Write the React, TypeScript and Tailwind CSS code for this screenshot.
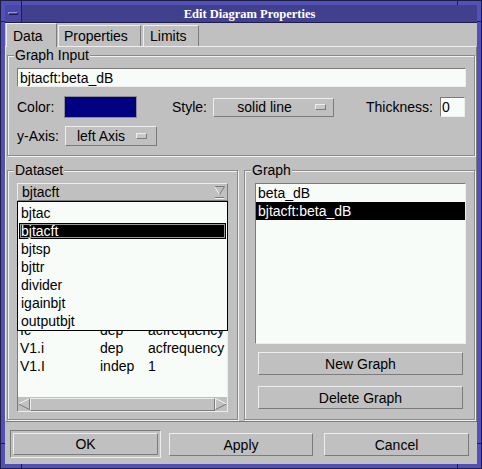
import React from 'react';

const raised = 'border border-t-[#ededed] border-l-[#ededed] border-r-[#7b7b7b] border-b-[#7b7b7b]';
const sunken = 'border border-t-[#7b7b7b] border-l-[#7b7b7b] border-r-[#ededed] border-b-[#ededed]';
const groupBox =
  'min-w-0 border border-[#8a8a8a] shadow-[inset_1px_1px_0_#f2f2f2,1px_1px_0_#f2f2f2]';
const legendCls = 'ml-[6px] px-[1px] bg-[#c0c0c0] leading-[16px]';

const datasets = ['bjtac', 'bjtacft', 'bjtsp', 'bjttr', 'divider', 'igainbjt', 'outputbjt'];
const variables = [
  ['Ic', 'dep', 'acfrequency'],
  ['V1.i', 'dep', 'acfrequency'],
  ['V1.I', 'indep', '1'],
];
const graphs = ['beta_dB', 'bjtacft:beta_dB'];

const Indicator: React.FC = () => (
  <span className={`block w-[11px] h-[6px] bg-[#c8c8c8] ${raised}`} />
);

const DownArrow: React.FC = () => (
  <svg width="11" height="13" viewBox="0 0 11 13">
    <polyline points="0.5,0.5 10.5,0.5" stroke="#7b7b7b" fill="none" />
    <polyline points="0.5,0.5 5.5,8.5" stroke="#f0f0f0" fill="none" />
    <polyline points="10.5,0.5 5.5,8.5" stroke="#7b7b7b" fill="none" />
    <line x1="1" y1="11.5" x2="10" y2="11.5" stroke="#7b7b7b" />
    <line x1="1" y1="12.5" x2="10" y2="12.5" stroke="#f0f0f0" />
  </svg>
);

const ScrollArrow: React.FC<{ dir: 'left' | 'right' }> = ({ dir }) => (
  <svg width="12" height="12" viewBox="0 0 12 12">
    {dir === 'left' ? (
      <>
        <polyline points="11.5,0.5 0.5,6" stroke="#f0f0f0" fill="none" />
        <polyline points="0.5,6 11.5,11.5 11.5,0.5" stroke="#7b7b7b" fill="none" />
      </>
    ) : (
      <>
        <polyline points="0.5,11.5 0.5,0.5 11.5,6" stroke="#f0f0f0" fill="none" />
        <polyline points="11.5,6 0.5,11.5" stroke="#7b7b7b" fill="none" />
      </>
    )}
  </svg>
);

const App: React.FC = () => {
  return (
    <div className="relative w-[482px] h-[469px] bg-[#5151b6] border border-[#1d1d48] p-[4px] flex flex-col font-['Liberation_Sans',Arial,sans-serif] text-[14px] leading-[16px] text-black">
      {/* frame resize notches */}
      <span className="absolute left-[20px] top-0 w-px h-[4px] bg-[#1d1d48]" />
      <span className="absolute left-[456px] top-0 w-px h-[4px] bg-[#1d1d48]" />
      <span className="absolute left-[20px] bottom-0 w-px h-[4px] bg-[#1d1d48]" />
      <span className="absolute left-[456px] bottom-0 w-px h-[4px] bg-[#1d1d48]" />
      <span className="absolute left-0 top-[20px] w-[4px] h-px bg-[#1d1d48]" />
      <span className="absolute left-0 top-[442px] w-[4px] h-px bg-[#1d1d48]" />
      <span className="absolute right-0 top-[20px] w-[4px] h-px bg-[#1d1d48]" />
      <span className="absolute right-0 top-[442px] w-[4px] h-px bg-[#1d1d48]" />

      {/* title bar */}
      <div className="flex h-[18px] border-b border-[#1d1d48]">
        <div className="w-[17px] border-r border-[#1d1d48] bg-[#4848a8] flex items-center justify-center">
          <span className="block w-[10px] h-[3px] border border-t-[#9090e0] border-l-[#9090e0] border-b-[#1d1d48] border-r-[#1d1d48]" />
        </div>
        <div className="flex-1 bg-[#40408e] flex items-center justify-center font-['Liberation_Serif',serif] font-bold text-[12.5px] text-white">
          Edit Diagram Properties
        </div>
      </div>

      <div className="flex-1 bg-[#c0c0c0] flex flex-col">
        {/* tabs */}
        <div className="h-[23px] flex items-end pl-[1px]">
          <div className="relative z-10 -mb-px h-[24px] w-[51px] bg-[#c0c0c0] border-l border-t border-r border-l-[#ededed] border-t-[#ededed] border-r-[#7b7b7b] pl-[6px] flex items-center">
            Data
          </div>
          <div className="ml-[1px] h-[21px] w-[83px] border-l border-t border-r border-l-[#ededed] border-t-[#ededed] border-r-[#7b7b7b] pl-[5px] flex items-center">
            Properties
          </div>
          <div className="ml-[2px] h-[21px] w-[56px] border-l border-t border-r border-l-[#ededed] border-t-[#ededed] border-r-[#7b7b7b] pl-[6px] flex items-center">
            Limits
          </div>
        </div>

        {/* tab pane */}
        <div className={`h-[376px] flex flex-col px-[1px] ${raised}`}>
          <fieldset className={groupBox}>
            <legend className={legendCls}>Graph Input</legend>
            <div className="pl-[9px] pr-[8px] pt-[5px] pb-[9px]">
              <div className={`h-[19px] bg-[#f8fcf8] pl-[2px] flex items-center ${sunken}`}>
                bjtacft:beta_dB
              </div>
              <div className="mt-[9px] h-[22px] flex items-center">
                <span className="w-[47px]">Color:</span>
                <span className="w-[73px] h-[22px] bg-[#000080] border border-[#8c8c8c]" />
                <span className="ml-[35px] w-[41px]">Style:</span>
                <div className={`w-[121px] h-[19px] flex items-center ${raised}`}>
                  <span className="flex-1 text-center">solid line</span>
                  <span className="mr-[7px]">
                    <Indicator />
                  </span>
                </div>
                <span className="ml-[32px] w-[74px]">Thickness:</span>
                <div className={`w-[25px] h-[20px] bg-[#f8fcf8] pl-px flex items-center ${sunken}`}>
                  0
                </div>
              </div>
              <div className="mt-[8px] h-[20px] flex items-center">
                <span className="w-[48px]">y-Axis:</span>
                <div className={`w-[92px] h-[20px] flex items-center ${raised}`}>
                  <span className="flex-1 text-center">left Axis</span>
                  <span className="mr-[9px]">
                    <Indicator />
                  </span>
                </div>
              </div>
            </div>
          </fieldset>

          <div className="mt-[6px] flex-1 flex gap-[6px] pb-[1px]">
            {/* Dataset */}
            <fieldset className={`w-[231px] flex flex-col ${groupBox}`}>
              <legend className={legendCls}>Dataset</legend>
              <div className="flex-1 flex flex-col pl-[9px] pr-[9px] pt-[5px] pb-[7px]">
                <div className="relative flex-1 flex flex-col">
                  <div className={`h-[18px] flex items-center pl-[4px] pr-[2px] ${raised}`}>
                    <span className="flex-1">bjtacft</span>
                    <DownArrow />
                  </div>
                  <div className={`flex-1 flex flex-col ${sunken}`}>
                    <div className="flex-1 bg-[#f8fcf8] overflow-hidden pt-[119px] pl-[2px]">
                      {variables.map(([name, kind, dep]) => (
                        <div key={name} className="h-[18px] flex items-center">
                          <span className="w-[80px]">{name}</span>
                          <span className="w-[48px]">{kind}</span>
                          <span>{dep}</span>
                        </div>
                      ))}
                    </div>
                    <div className="h-[14px] flex items-center bg-[#c0c0c0]">
                      <ScrollArrow dir="left" />
                      <div className={`flex-1 h-[13px] ${raised}`} />
                      <ScrollArrow dir="right" />
                    </div>
                  </div>

                  {/* open dropdown */}
                  <div className="absolute left-0 right-0 top-[18px] z-10 bg-[#f8fcf8] border border-black pt-[2px]">
                    {datasets.map((d) => (
                      <div key={d} className="h-[18px] flex">
                        <div
                          className={
                            d === 'bjtacft'
                              ? 'flex-1 m-px bg-black text-white pl-[2px] flex items-center outline outline-1 outline-[#9a9a9a] -outline-offset-2'
                              : 'flex-1 pl-[3px] flex items-center'
                          }
                        >
                          {d}
                        </div>
                      </div>
                    ))}
                  </div>
                </div>
              </div>
            </fieldset>

            {/* Graph */}
            <fieldset className={`flex-1 flex flex-col ${groupBox}`}>
              <legend className={legendCls}>Graph</legend>
              <div className="flex-1 flex flex-col pl-[10px] pr-[8px] pt-[5px]">
                <div className={`h-[161px] bg-[#f8fcf8] ${sunken}`}>
                  {graphs.map((g) => (
                    <div
                      key={g}
                      className={`h-[18px] pl-[2px] flex items-center ${
                        g === 'bjtacft:beta_dB' ? 'bg-black text-white' : ''
                      }`}
                    >
                      {g}
                    </div>
                  ))}
                </div>
                <button className={`mt-[8px] mx-[3px] h-[23px] bg-[#c0c0c0] ${raised}`}>
                  New Graph
                </button>
                <button className={`mt-[11px] mx-[3px] h-[23px] bg-[#c0c0c0] ${raised}`}>
                  Delete Graph
                </button>
              </div>
            </fieldset>
          </div>
        </div>

        {/* dialog buttons */}
        <div className="flex-1 flex items-start pt-[8px] pl-[5px]">
          <div className={`w-[151px] h-[28px] p-[2px] flex ${sunken}`}>
            <button className={`flex-1 bg-[#c0c0c0] ${raised}`}>OK</button>
          </div>
          <button className={`ml-[8px] mt-[3px] w-[144px] h-[23px] bg-[#c0c0c0] ${raised}`}>
            Apply
          </button>
          <button className={`ml-[11px] mt-[3px] w-[145px] h-[23px] bg-[#c0c0c0] ${raised}`}>
            Cancel
          </button>
        </div>
      </div>
    </div>
  );
};

export default App;
